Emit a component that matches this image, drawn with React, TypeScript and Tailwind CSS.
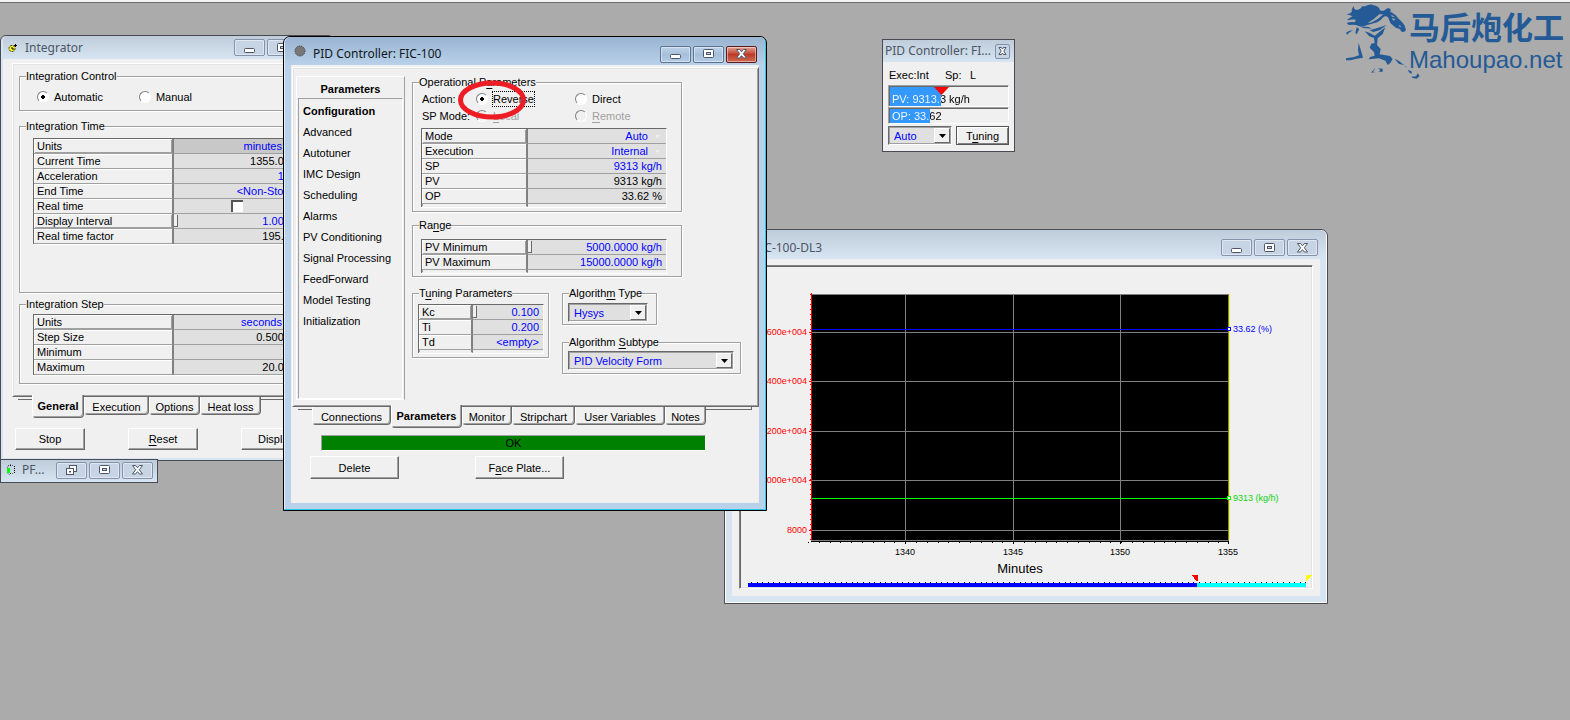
import React, { ReactNode } from "react";

const etched =
  "min-w-0 border border-[#a0a0a0] shadow-[1px_1px_0_#fff,inset_1px_1px_0_#fff]";

function Group({ title, className = "", body, children }: {
  title: ReactNode; className?: string; body: string; children: ReactNode;
}) {
  return (
    <fieldset className={`${etched} ${className}`}>
      <legend className="ml-1.5 h-3 bg-[#f0f0f0] leading-3 whitespace-nowrap">{title}</legend>
      <div className={body}>{children}</div>
    </fieldset>
  );
}

function Key({ children }: { children: ReactNode }) {
  return <span className="underline underline-offset-2">{children}</span>;
}

function Radio({ name, checked, disabled, className = "", children }: {
  name: string; checked?: boolean; disabled?: boolean; className?: string; children: ReactNode;
}) {
  return (
    <label className={`flex items-center gap-[5px] ${disabled ? "text-[#a0a0a0]" : ""} ${className}`}>
      <input
        type="radio"
        name={name}
        defaultChecked={checked}
        disabled={disabled}
        className="size-3 appearance-none rounded-full border border-t-[#808080] border-r-white border-b-white border-l-[#808080] bg-white checked:bg-[radial-gradient(circle,#000_2px,#fff_2px)] disabled:bg-[#f0f0f0]"
      />
      {children}
    </label>
  );
}

function CaptionGlyph({ kind }: { kind: string }) {
  if (kind === "min")
    return (
      <svg width="14" height="12" viewBox="0 0 14 12">
        <rect x="1.500" y="6.500" width="10" height="4" rx="1" fill="#fff" stroke="#4d5566" />
      </svg>
    );
  if (kind === "max")
    return (
      <svg width="14" height="12" viewBox="0 0 14 12">
        <rect x="1.500" y="1.500" width="10" height="8" rx="1" fill="#fff" stroke="#4d5566" />
        <rect x="4.500" y="4.500" width="4" height="2" fill="#c4d2e2" stroke="#4d5566" />
      </svg>
    );
  if (kind === "restore")
    return (
      <svg width="14" height="12" viewBox="0 0 14 12">
        <rect x="4.500" y="1.500" width="7" height="6" fill="#fff" stroke="#4d5566" />
        <rect x="1.500" y="4.500" width="7" height="6" fill="#fff" stroke="#4d5566" />
        <rect x="4" y="7" width="2" height="1.500" fill="#4d5566" />
      </svg>
    );
  return (
    <svg width="14" height="12" viewBox="0 0 14 12">
      <path
        d="M1.500 1.500h3L6.500 3.800 8.500 1.500h3L8.300 5.700 11.500 10H8.500L6.500 7.700 4.500 10H1.500l3.200-4.300z"
        fill="#fff"
        stroke="#4d5566"
        strokeLinejoin="round"
      />
    </svg>
  );
}

function CaptionButton({ kind, label, tone = "idle" }: { kind: string; label: string; tone?: "idle" | "active" | "danger" }) {
  const tones = {
    idle: "border-[#8592ad] bg-[#c6d4e4]",
    active: "border-[#5d7390] bg-linear-to-b from-[#c0d3e8] via-[#a5bfdb] to-[#b4cce6]",
    danger: "border-[#5c1a1c] bg-linear-to-b from-[#e0a396] via-[#bd3a25] to-[#cf6a50]",
  };
  return (
    <button
      type="button"
      aria-label={label}
      className={`flex h-[17px] w-[31px] items-center justify-center rounded-[2px] border shadow-[inset_0_0_0_1px_rgba(255,255,255,0.45)] ${tones[tone]}`}
    >
      <CaptionGlyph kind={kind} />
    </button>
  );
}

function PushButton({ className, children }: { className: string; children: ReactNode }) {
  return (
    <button
      type="button"
      className={`border border-t-white border-r-[#696969] border-b-[#696969] border-l-white bg-[#f0f0f0] shadow-[inset_-1px_-1px_0_#a0a0a0] ${className}`}
    >
      {children}
    </button>
  );
}

function Combo({ label, value, className }: { label: string; value: string; className: string }) {
  return (
    <div
      className={`relative h-[19px] border border-t-[#696969] border-r-white border-b-white border-l-[#696969] shadow-[inset_1px_1px_0_#a0a0a0] ${className}`}
    >
      <select
        aria-label={label}
        className="block h-[17px] w-full appearance-none border border-[#a0a0a0] bg-[#e0e0e0] pl-1 text-[11px] text-[#0000ff]"
      >
        <option>{value}</option>
      </select>
      <span className="pointer-events-none absolute top-px right-px flex h-[15px] w-4 items-center justify-center border border-t-white border-r-[#696969] border-b-[#696969] border-l-white bg-[#f0f0f0]">
        <svg width="7" height="4" viewBox="0 0 7 4"><path d="M0 0h7L3.5 4z" /></svg>
      </span>
    </div>
  );
}

type Row = { name: string; value?: ReactNode; input?: boolean; menu?: boolean; grip?: boolean; raised?: boolean; dark?: boolean };

function Grid({ rows, head, tail, className }: { rows: Row[]; head: string; tail?: boolean; className: string }) {
  return (
    <table
      className={`table-fixed border-separate border-spacing-0 border-t border-r border-l border-t-[#696969] border-r-white border-l-[#696969] shadow-[0_1px_0_#fff,inset_1px_1px_0_#a0a0a0] ${className}`}
    >
      <colgroup>
        <col className={head} />
        <col />
      </colgroup>
      <tbody>
        {rows.map((r) => (
          <tr key={r.name} className="h-[15px]">
            <th
              scope="row"
              className={`h-[15px] border-r-2 border-b border-r-[#808080] border-b-[#a0a0a0] p-0 pl-[3px] text-left leading-[14px] font-normal whitespace-nowrap ${
                r.raised
                  ? "shadow-[inset_1px_1px_0_#fff,inset_-1px_-1px_0_#a0a0a0]"
                  : "shadow-[inset_1px_1px_0_#fff]"
              }`}
            >
              {r.name}
            </th>
            <td
              className={`h-[15px] border-b border-[#a0a0a0] p-0 leading-[14px] whitespace-nowrap ${
                r.dark ? "bg-[#c8c8c8]" : "bg-[#e0e0e0]"
              } ${r.input ? "text-[#0000ff]" : ""}`}
            >
              <div className="flex items-center justify-end pr-1">
                {r.grip && <span className="mr-auto h-3 w-1 border-r border-b border-[#696969] bg-[#f0f0f0]" />}
                {r.value}
                {r.menu && (
                  <svg className="mr-0.5 ml-[7px]" width="5" height="3" viewBox="0 0 5 3">
                    <path d="M0 0h5L2.5 3z" fill="#f0f0f0" />
                  </svg>
                )}
              </div>
            </td>
          </tr>
        ))}
        {tail && (
          <tr aria-hidden="true">
            <td className="h-[3px] border-r-2 border-b border-r-[#808080] border-b-[#f0f0f0] p-0" />
            <td className="h-[3px] border-b border-[#f0f0f0] p-0" />
          </tr>
        )}
      </tbody>
    </table>
  );
}

function Tabs({ tabs, active, className }: { tabs: { name: string; width: string }[]; active: string; className: string }) {
  return (
    <div role="tablist" className={`relative flex items-start ${className}`}>
      {tabs.map((t) => {
        const on = t.name === active;
        return (
          <button
            key={t.name}
            type="button"
            role="tab"
            aria-selected={on}
            className={`rounded-b-[4px] border-r border-b border-l border-r-[#696969] border-b-[#696969] border-l-white bg-[#f0f0f0] text-center whitespace-nowrap shadow-[inset_-1px_-1px_0_#a0a0a0] ${t.width} ${
              on ? "-mt-0.5 h-[23px] font-bold" : "h-[18px] pt-0.5"
            }`}
          >
            {t.name}
          </button>
        );
      })}
    </div>
  );
}

const titleFont = "font-['Noto_Sans','Open_Sans',sans-serif] text-[12px] whitespace-nowrap";

function Integrator() {
  return (
    <section className="absolute top-[35px] left-0 w-[334px] rounded-t-[6px] border border-[#4a4a52] bg-[#d7e4f2] px-0.5 pb-0.5">
      <header className="flex h-[23px] items-center gap-0.5 rounded-t-[5px] bg-linear-to-b from-[#bfcddb] to-[#d7e4f2]">
        <svg className="ml-0.5" width="14" height="14" viewBox="0 0 14 14">
          <circle cx="7" cy="7.500" r="3" fill="#ff0" stroke="#222" strokeDasharray="2 1" />
          <path d="M7 6v2h2M10.500 3v3M9 4.500h3" stroke="#000" fill="none" />
        </svg>
        <h2 className={`ml-1 grow text-[#4c5563] ${titleFont}`}>Integrator</h2>
        <CaptionButton kind="min" label="Minimize" />
        <CaptionButton kind="max" label="Maximize" />
        <CaptionButton kind="close" label="Close" />
      </header>
      <div className="bg-[#f0f0f0] pt-1 pb-2">
        <div className="mr-1.5 ml-[9px] border border-t-white border-r-[#696969] border-b-[#696969] border-l-white px-1.5 pt-1.5 pb-3 shadow-[inset_1px_1px_0_#e3e3e3,inset_-1px_-1px_0_#a0a0a0]">
          <Group title="Integration Control" body="flex gap-9 pt-2 pb-1.5 pl-[17px]">
            <Radio name="integration" checked>Automatic</Radio>
            <Radio name="integration">Manual</Radio>
          </Group>
          <Group title="Integration Time" className="mt-[9px]" body="pt-1.5 pb-12 pl-[13px]">
            <Grid
              className="w-[268px]"
              head="w-[140px]"
              rows={[
                { name: "Units", value: "minutes", input: true, menu: true, raised: true, dark: true },
                { name: "Current Time", value: "1355.000" },
                { name: "Acceleration", value: "100", input: true },
                { name: "End Time", value: "<Non-Stop>", input: true },
                {
                  name: "Real time",
                  value: (
                    <input
                      type="checkbox"
                      aria-label="Real time"
                      className="mr-[53px] size-3 appearance-none border-t-2 border-l-2 border-[#555] bg-white"
                    />
                  ),
                },
                { name: "Display Interval", value: "1.0000", input: true, grip: true, raised: true },
                { name: "Real time factor", value: "195.50" },
              ]}
            />
          </Group>
          <Group title="Integration Step" className="mt-[5px]" body="pt-1 pb-2 pl-[13px]">
            <Grid
              className="w-[268px]"
              head="w-[140px]"
              rows={[
                { name: "Units", value: "seconds", input: true, menu: true, raised: true },
                { name: "Step Size", value: "0.50000" },
                { name: "Minimum" },
                { name: "Maximum", value: "20.000" },
              ]}
            />
          </Group>
        </div>
        <div className="mr-3 ml-[15px] h-[3px] border-r border-b border-[#696969]" />
        <Tabs
          className="-mt-[3px] ml-[29px] h-[22px]"
          active="General"
          tabs={[
            { name: "General", width: "w-[52px]" },
            { name: "Execution", width: "w-[65px]" },
            { name: "Options", width: "w-[51px]" },
            { name: "Heat loss", width: "w-[61px]" },
          ]}
        />
        <div className="mt-[9px] ml-3 flex gap-[43px]">
          <PushButton className="h-[22px] w-[70px]">Stop</PushButton>
          <PushButton className="h-[22px] w-[70px]"><Key>R</Key>eset</PushButton>
          <PushButton className="h-[22px] w-[70px]">Display</PushButton>
        </div>
      </div>
    </section>
  );
}

function MinimizedCase() {
  return (
    <section className="absolute top-[459px] left-0 flex h-[24px] w-[158px] items-center gap-0.5 border border-[#4a4a52] bg-linear-to-b from-[#bfcddb] to-[#d7e4f2] pr-1 pb-0.5">
      <svg className="ml-1.5" width="10" height="12" viewBox="0 0 10 12">
        <path d="M4 1H2L.5 3v6L3 11" fill="none" stroke="#222" strokeDasharray="1 1" />
        <rect x="0" y="4" width="3" height="5" fill="#0f0" />
        <path d="M3 1.500h2.500M3 9.500h2.500M7.500 2v8" fill="none" stroke="#000" strokeDasharray="1 1" />
      </svg>
      <h2 className={`ml-[3px] grow text-[#4c5563] ${titleFont}`}>PF...</h2>
      <CaptionButton kind="restore" label="Restore" />
      <CaptionButton kind="max" label="Maximize" />
      <CaptionButton kind="close" label="Close" />
    </section>
  );
}

const pages = [
  "Configuration", "Advanced", "Autotuner", "IMC Design", "Scheduling", "Alarms",
  "PV Conditioning", "Signal Processing", "FeedForward", "Model Testing", "Initialization",
];

function PidController() {
  return (
    <section className="absolute top-9 left-[283px] w-[484px] rounded-t-[7px] border border-black bg-[#b9d1ea] px-[7px] pb-[7px] shadow-[inset_-1px_-1px_0_#2cc8ea,inset_1px_1px_0_#e4eef8]">
      <header className="-mx-1.5 flex h-7 items-center gap-0.5 rounded-t-[6px] bg-linear-to-b from-[#99b4d1] to-[#b9d1ea] pt-1.5 pr-2 pl-1.5">
        <svg className="mb-1.5 ml-[3px]" width="12" height="12" viewBox="0 0 12 12">
          <circle cx="6" cy="6" r="5" fill="#777" stroke="#333" strokeDasharray="1 1" />
        </svg>
        <h2 className={`ml-[5px] grow text-[#101820] ${titleFont}`}>PID Controller: FIC-100</h2>
        <CaptionButton kind="min" label="Minimize" tone="active" />
        <CaptionButton kind="max" label="Maximize" tone="active" />
        <CaptionButton kind="close" label="Close" tone="danger" />
      </header>
      <div className="bg-[#f0f0f0] pt-0.5 pb-6">
        <div className="ml-px flex border border-t-white border-r-[#696969] border-b-[#696969] border-l-white pt-2 pb-1.5 pl-[3px] shadow-[inset_1px_1px_0_#e3e3e3,inset_-1px_-1px_0_#a0a0a0]">
          <div className="w-[109px] border border-t-white border-r-[#a0a0a0] border-b-white border-l-white">
            <h3 className="pt-[3px] text-center leading-[18px] font-bold">Parameters</h3>
            <ul className="mr-px ml-px h-[301px] border border-t-[#a0a0a0] border-r-white border-b-white border-l-[#a0a0a0] pt-0.5 pl-1">
              {pages.map((p, i) => (
                <li key={p}>
                  <a href="#" className={`block leading-[21px] whitespace-nowrap ${i === 0 ? "font-bold" : ""}`}>{p}</a>
                </li>
              ))}
            </ul>
          </div>
          <div className="ml-[7px]">
            <Group title={<>Operational P<Key>a</Key>rameters</>} className="w-[270px]" body="pt-0.5 pb-1 pl-2">
              <div className="relative flex h-[17px] items-center pl-px">
                <span className="w-[54px]">Action:</span>
                <Radio name="action" checked className="w-[99px]">
                  <span className="outline-1 outline-black outline-dotted">Reverse</span>
                </Radio>
                <Radio name="action">Direct</Radio>
                <svg className="pointer-events-none absolute -top-2.5 left-9" width="70" height="40" viewBox="0 0 70 40">
                  <ellipse cx="35" cy="20" rx="31.500" ry="17" fill="none" stroke="#ee1c24" strokeWidth="5" />
                </svg>
              </div>
              <div className="flex h-[17px] items-center pl-px">
                <span className="w-[54px]">SP Mode:</span>
                <Radio name="sp" disabled className="w-[99px]"><span><Key>L</Key>ocal</span></Radio>
                <Radio name="sp" disabled><span><Key>R</Key>emote</span></Radio>
              </div>
              <Grid
                className="mt-1 w-[246px]"
                head="w-[106px]"
                tail
                rows={[
                  { name: "Mode", value: "Auto", input: true, menu: true, raised: true },
                  { name: "Execution", value: "Internal", input: true, menu: true },
                  { name: "SP", value: "9313 kg/h", input: true },
                  { name: "PV", value: "9313 kg/h" },
                  { name: "OP", value: "33.62 %" },
                ]}
              />
            </Group>
            <Group title={<>Ra<Key>n</Key>ge</>} className="mt-[7px] w-[270px]" body="pt-2 pb-[3px] pl-2">
              <Grid
                className="w-[246px]"
                head="w-[106px]"
                tail
                rows={[
                  { name: "PV Minimum", value: "5000.0000 kg/h", input: true, grip: true, raised: true },
                  { name: "PV Maximum", value: "15000.0000 kg/h", input: true },
                ]}
              />
            </Group>
            <div className="mt-2.5 flex items-start gap-[13px]">
              <Group title={<>T<Key>u</Key>ning Parameters</>} className="w-[137px]" body="pt-[5px] pb-1 pl-[5px]">
                <Grid
                  className="w-[126px]"
                  head="w-[54px]"
                  tail
                  rows={[
                    { name: "Kc", value: "0.100", input: true, grip: true, raised: true },
                    { name: "Ti", value: "0.200", input: true },
                    { name: "Td", value: "<empty>", input: true },
                  ]}
                />
              </Group>
              <div>
                <Group title={<>Algorith<Key>m</Key> Type</>} className="w-[95px]" body="pt-1 pb-0.5 pl-[5px]">
                  <Combo label="Algorithm Type" value="Hysys" className="w-[80px]" />
                </Group>
                <Group title={<>Algorithm <Key>S</Key>ubtype</>} className="mt-[11px] w-[179px]" body="pt-[3px] pb-[3px] pl-[5px]">
                  <Combo label="Algorithm Subtype" value="PID Velocity Form" className="w-[166px]" />
                </Group>
              </div>
            </div>
          </div>
        </div>
        <div className="mr-[7px] ml-[7px] h-[3px] border-r border-b border-[#696969]" />
        <Tabs
          className="-mt-[3px] ml-[21px] h-[22px]"
          active="Parameters"
          tabs={[
            { name: "Connections", width: "w-[79px]" },
            { name: "Parameters", width: "w-[71px]" },
            { name: "Monitor", width: "w-[50px]" },
            { name: "Stripchart", width: "w-[63px]" },
            { name: "User Variables", width: "w-[90px]" },
            { name: "Notes", width: "w-[41px]" },
          ]}
        />
        <output className="mt-1.5 ml-[30px] block h-4 w-[385px] border border-t-[#a0a0a0] border-r-white border-b-white border-l-[#a0a0a0] bg-[#008000] text-center leading-[14px]">
          OK
        </output>
        <div className="mt-[5px] ml-[19px] flex gap-[76px]">
          <PushButton className="h-[23px] w-[89px]">Delete</PushButton>
          <PushButton className="h-[23px] w-[89px]">F<Key>a</Key>ce Plate...</PushButton>
        </div>
      </div>
    </section>
  );
}

function FacePlate() {
  return (
    <section className="absolute top-[39px] left-[882px] w-[133px] border border-[#4a4a52] bg-[#f0f0f0] pb-1.5">
      <header className="flex h-[22px] items-center bg-linear-to-b from-[#bfcddb] to-[#d7e4f2] pr-1 pl-0.5">
        <h2 className={`grow text-[#4c5563] ${titleFont}`}>PID Controller: FI...</h2>
        <button
          type="button"
          aria-label="Close"
          className="flex size-[15px] items-center justify-center rounded-[2px] border border-[#8592ad] bg-[#c6d4e4]"
        >
          <svg width="9" height="8" viewBox="0 0 9 8">
            <path d="M1 .5h2.500l1 1.500 1-1.500H8L5.800 4 8 7.500H5.500l-1-1.500-1 1.500H1L3.200 4z" fill="#fff" stroke="#4d5566" />
          </svg>
        </button>
      </header>
      <div className="flex h-[23px] items-center pt-[3px] pl-1.5">
        <span className="w-14">Exec:Int</span>
        <span className="w-[25px]">Sp:</span>
        <span>L</span>
      </div>
      <div className="mr-[5px] ml-[5px] border border-t-[#a0a0a0] border-r-white border-b-white border-l-[#a0a0a0]">
        <div className="relative flex h-5 items-end border-t border-l border-[#696969] bg-[linear-gradient(90deg,#3399ff_51px,#f0f0f0_51px)]">
          <svg className="absolute top-0 left-11" width="15" height="8" viewBox="0 0 15 8"><path d="M0 0h15L7.500 8z" fill="red" /></svg>
          <span className="bg-[linear-gradient(90deg,#fff_51px,#000_51px)] bg-clip-text pl-0.5 leading-[13px] text-transparent">PV: 9313.3 kg/h</span>
        </div>
      </div>
      <div className="mr-[5px] ml-[5px] border border-t-[#a0a0a0] border-r-white border-b-white border-l-[#a0a0a0]">
        <div className="flex h-[15px] items-end border-t border-l border-[#696969] bg-[linear-gradient(90deg,#3399ff_40px,#f0f0f0_40px)]">
          <span className="bg-[linear-gradient(90deg,#fff_40px,#000_40px)] bg-clip-text pl-0.5 leading-[14px] text-transparent">OP: 33.62</span>
        </div>
      </div>
      <div className="mt-0.5 ml-[5px] flex gap-1">
        <Combo label="Mode" value="Auto" className="w-[64px]" />
        <button
          type="button"
          className="h-[19px] w-[53px] border border-[#555] bg-[#f0f0f0] shadow-[inset_1px_1px_0_#fff,inset_-1px_-1px_0_#808080]"
        >
          T<Key>u</Key>ning
        </button>
      </div>
    </section>
  );
}

const yTicks = [
  { y: 332, text: "1.600e+004" },
  { y: 381, text: "1.400e+004" },
  { y: 431, text: "1.200e+004" },
  { y: 480, text: "1.000e+004" },
  { y: 530, text: "8000" },
];
const xTicks = [
  { x: 905, text: "1340" },
  { x: 1013, text: "1345" },
  { x: 1120, text: "1350" },
  { x: 1228, text: "1355" },
];

function StripChart() {
  return (
    <section className="absolute top-[229px] left-[724px] w-[604px] rounded-t-[7px] border border-[#4a4a52] bg-[#d7e4f2] px-[7px] pb-[7px] shadow-[inset_1px_1px_0_#fff,inset_-1px_-1px_0_#fff]">
      <header className="-mx-1.5 flex h-[29px] items-center gap-0.5 rounded-t-[6px] bg-linear-to-b from-[#bfcddb] to-[#d7e4f2] pt-1.5 pr-2 pl-[7px]">
        <h2 className={`ml-[21px] grow text-[#4c5563] ${titleFont}`}>FIC-100-DL3</h2>
        <CaptionButton kind="min" label="Minimize" />
        <CaptionButton kind="max" label="Maximize" />
        <CaptionButton kind="close" label="Close" />
      </header>
      <div className="bg-[#f0f0f0] px-[7px] pt-1.5 pb-[7px]">
        <div className="border border-t-[#808080] border-r-white border-b-white border-l-[#808080] shadow-[inset_1px_1px_0_#696969,inset_-1px_-1px_0_#e3e3e3]">
          <svg
            viewBox="740 266 572 322"
            className="block h-auto w-full font-['Liberation_Sans',Arial,sans-serif] text-[9px]"
            shapeRendering="crispEdges"
            role="img"
            aria-label="FIC-100 strip chart"
          >
            <rect x="811" y="294" width="418" height="247" fill="#000" />
            <g stroke="#808080">
              <path d="M811 294.500H1228M811 540.500H1228M1228.500 294V541" />
              {yTicks.map((t) => <path key={t.y} d={`M811 ${t.y}.5H1228`} />)}
              {xTicks.map((t) => <path key={t.x} d={`M${t.x}.5 294V541`} />)}
            </g>
            <path d="M811 329.500H1229" stroke="#0000ff" />
            <path d="M811 498.500H1229" stroke="#00ff00" />
            <path d="M1229.500 294V540" stroke="#ffff00" />
            <path d="M811.500 293V540" stroke="red" />
            <path d="M810.500 294V540" stroke="red" strokeDasharray="1 4" />
            {yTicks.map((t) => (
              <g key={t.y}>
                <path d={`M809 ${t.y}.5H812`} stroke="red" />
                <text x="807" y={t.y + 3} textAnchor="end" fill="red">{t.text}</text>
              </g>
            ))}
            <path d="M811 541.500H1229" stroke="#000" />
            <path d="M808 542.500H1229" stroke="#000" strokeDasharray="1 9.800" />
            {xTicks.map((t) => (
              <g key={t.x}>
                <path d={`M${t.x}.5 541V544`} stroke="#000" />
                <text x={t.x} y="555" textAnchor="middle">{t.text}</text>
              </g>
            ))}
            <rect x="1227.500" y="327.500" width="3" height="3" fill="#fff" stroke="#0000ff" />
            <text x="1233" y="332" fill="#0000ff">33.62 (%)</text>
            <rect x="1227.500" y="496.500" width="3" height="3" fill="#fff" stroke="#00ff00" />
            <text x="1233" y="501" fill="#10d010">9313 (kg/h)</text>
            <text x="1020" y="573" textAnchor="middle" className="text-[13px]">Minutes</text>
            <path d="M751 582.500H1306" stroke="#000" strokeDasharray="1 4.600" />
            <rect x="748" y="583" width="449" height="4" fill="#0000ff" />
            <rect x="1197" y="583" width="109" height="4" fill="#00ffff" />
            <path d="M1192 575h6v6h-2z" fill="red" />
            <path d="M1306 575h6l-5 6h-1z" fill="#ff0" />
          </svg>
        </div>
      </div>
    </section>
  );
}

function Watermark() {
  return (
    <div className="absolute top-[3px] right-1.5 flex text-[#245a96]">
      <svg width="77" height="77" viewBox="45 10 231 231" fill="currentColor" aria-hidden="true">
        <path d="M49 44Q60 43 66 36Q62 30 72 19Q70 29 80 31Q92 30 97 19Q104 22 112 17Q122 12 131 17Q148 20 150 32Q158 36 166 30Q172 24 181 27Q184 33 180 38Q190 37 188 41Q200 46 206 57L216 67Q226 76 228 90Q225 99 216 97L208 87Q198 87 190 78L181 70L175 54Q168 46 158 54Q150 66 134 70L112 76Q98 82 86 79Q76 73 56 76L50 70Q62 66 74 68L78 60Q66 58 50 62Q58 54 68 50Q58 46 49 44Z" />
        <path d="M186 56L197 58L190 63Z M207 75L215 83L208 81Z M183 45L195 51L186 51Z M160 44Q146 58 126 68L112 71Q134 58 148 44Z" fill="#ababab" />
        <path d="M48 99Q58 92 70 92L60 97L51 105Z M80 83L88 88L80 104L76 100Z" />
        <path d="M88 80L116 82L126 87L100 85Z M119 92L150 83L170 76L150 91L130 97Z" />
        <path d="M104 95Q120 99 134 108L166 83L158 103L143 116L141 136L152 148L149 164L180 169L188 178L181 190L173 196L166 183L147 176L116 179L120 172L134 168L132 157L119 144L124 132L134 130L132 115L118 110Z" />
        <path d="M86 130L91 146L99 174L76 178L62 182H48V176L72 172L87 167L84 150Z" />
        <path d="M193 177L207 184L222 196L207 193Z M222 197L233 204L226 201Z M123 219L136 204L133 210L129 216L137 217Z M144 206L158 207L158 216L146 216L151 211Z M233 211L244 214L246 222L239 220Z M244 231L258 230L263 221L269 229L260 237L248 235Z" />
      </svg>
      <div className="-ml-[13px] flex flex-col">
        <span className="font-['Noto_Sans_CJK_SC',sans-serif] text-[31px] leading-[46px] font-bold whitespace-nowrap">马后炮化工</span>
        <span className="font-['Liberation_Sans',Arial,sans-serif] text-[24px] leading-[22px]">Mahoupao.net</span>
      </div>
    </div>
  );
}

export default function App() {
  return (
    <main className="relative min-h-screen w-full overflow-hidden bg-[#ababab] font-['Liberation_Sans',Arial,sans-serif] text-[11px] leading-[14px] text-black">
      <div className="h-[3px] border-b border-[#6d6d6d] bg-[#f0f2f4]" />
      <Watermark />
      <Integrator />
      <MinimizedCase />
      <StripChart />
      <FacePlate />
      <PidController />
    </main>
  );
}
